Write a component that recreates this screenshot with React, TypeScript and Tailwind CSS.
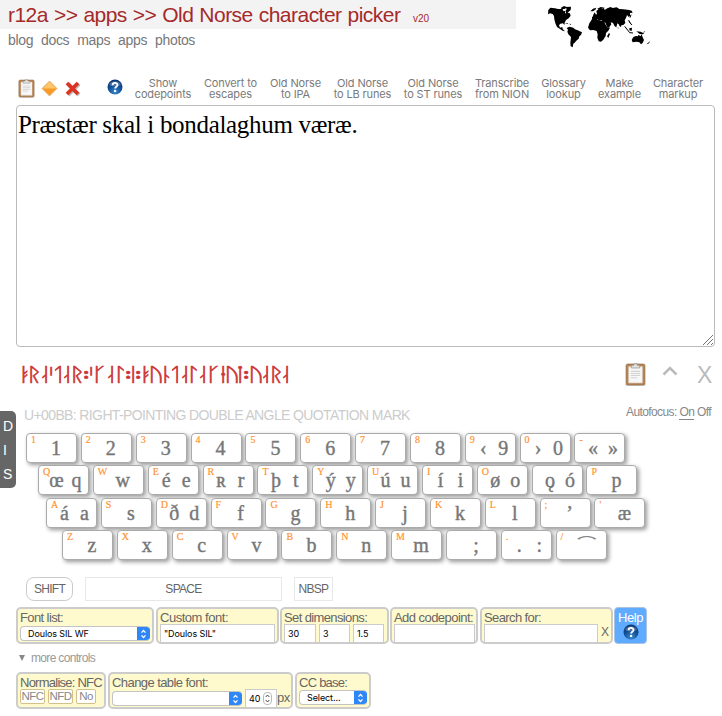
import type { ReactNode } from "react";

const RUNES: [string, number][] = [
  ["ᛓ", 24.5], ["ᚱ", 34], ["ᛆ", 45], ["ᛌ", 51], ["ᛐ", 58], ["ᛆ", 67], ["ᚱ", 77], ["᛬", 86], ["ᛌ", 91], ["ᚴ", 99],
  ["ᛆ", 111], ["ᛚ", 120], ["᛬", 128], ["ᛁ", 133], ["᛬", 138], ["ᛓ", 146], ["ᚢ", 156], ["ᚿ", 166], ["ᛐ", 175],
  ["ᛆ", 185], ["ᛚ", 193], ["ᛆ", 203], ["ᚴ", 213], ["ᚽ", 223], ["ᚢ", 232], ["ᛙ", 240], ["᛬", 246], ["ᚢ", 256],
  ["ᛆ", 266], ["ᚱ", 276], ["ᛆ", 286],
];

const ROWS: { indent: string; keys: [string, string][] }[] = [
  { indent: "pl-[26px]", keys: [["1", "1"], ["2", "2"], ["3", "3"], ["4", "4"], ["5", "5"], ["6", "6"], ["7", "7"], ["8", "8"], ["9", "‹ 9"], ["0", "› 0"], ["-", "« »"]] },
  { indent: "pl-[38px]", keys: [["Q", "œ q"], ["W", "w"], ["E", "é e"], ["R", "ʀ r"], ["T", "þ t"], ["Y", "ý y"], ["U", "ú u"], ["I", "í i"], ["O", "ø o"], ["", "ǫ ó"], ["P", "p"]] },
  { indent: "pl-[46px]", keys: [["A", "á a"], ["S", "s"], ["D", "ð d"], ["F", "f"], ["G", "g"], ["H", "h"], ["J", "j"], ["K", "k"], ["L", "l"], [";", "’"], ["'", "æ"]] },
  { indent: "pl-[62px]", keys: [["Z", "z"], ["X", "x"], ["C", "c"], ["V", "v"], ["B", "b"], ["N", "n"], ["M", "m"], ["", ";"], [".", ". :"], ["/", "⁀"]] },
];

const ACTIONS: [string, string, string][] = [
  ["w-[70px]", "Show", "codepoints"], ["w-[65px]", "Convert to", "escapes"], ["w-[65px]", "Old Norse", "to IPA"],
  ["w-[69px]", "Old Norse", "to LB runes"], ["w-[72px]", "Old Norse", "to ST runes"], ["w-[66px]", "Transcribe", "from NION"],
  ["w-[57px]", "Glossary", "lookup"], ["w-[55px]", "Make", "example"], ["w-[62px]", "Character", "markup"],
];

function Clipboard({ w, h }: { w: number; h: number }) {
  return (
    <svg width={w} height={h} viewBox="0 0 20 22" className="shrink-0">
      <ellipse cx="10" cy="21" rx="10" ry="1" fill="#ccc" />
      <rect x="1" y="1" width="18" height="20" rx="1.5" fill="#b98452" stroke="#8d6a48" strokeWidth=".6" />
      <path d="M3.500 3.500h13v15.500h-13z" fill="#f7f7f7" stroke="#ddd" strokeWidth=".5" />
      <path d="M5.500 8h9M5.500 10h9M5.500 12h9M5.500 14h6" stroke="#d2d2d2" strokeWidth="1" />
      <path d="M6 2.200h2.500V.7h3v1.500H14v2.600H6z" fill="#e3e3dc" stroke="#888" strokeWidth=".6" />
    </svg>
  );
}

function HelpBall() {
  return (
    <svg width="16" height="16" viewBox="0 0 16 16" className="shrink-0">
      <defs>
        <radialGradient id="ball" cx=".5" cy=".85" r=".9">
          <stop offset="0" stopColor="#3b8ad0" />
          <stop offset=".5" stopColor="#124f96" />
          <stop offset="1" stopColor="#0b2f68" />
        </radialGradient>
      </defs>
      <circle cx="8" cy="8" r="7.500" fill="url(#ball)" />
      <path d="M2 6a6.200 5 0 0 1 12 0Q8 8.500 2 6z" fill="#fff" opacity=".22" />
      <path d="M5.600 6.200C5.600 3.200 10.500 3.200 10.500 6c0 1.700-2.400 1.700-2.400 3.500" fill="none" stroke="#fff" strokeWidth="1.900" />
      <circle cx="8.100" cy="11.900" r="1.200" fill="#fff" />
    </svg>
  );
}

function WorldMap() {
  return (
    <svg width="106" height="44" viewBox="54 12 318 132" fill="#000">
      <path d="M55 30l6-7 14 2 12 3 10-2 4 8 6-2-2 7 8 4 6-4 3 8-6 8-8 5-4 8-1 7-4-5-8 1-4 5 3 7 7-2 1 6 7 7-7-2-9-6-8-5-5-11-3-12-1-10-4-6-8-2-6 3z" />
      <path d="M92 24l10-6 8 3-4 5-10 2zM106 21l17-1-1 10-10 9-5-6 3-6zM108 34l12 8-5 4-7-5zM104 69l9 1 2 3zM117 71l6 1v3zM76 27l12 0 4 5-10 1z" />
      <path d="M110 84l8-4 12 3 5 5 8 3 13 6-3 8-5 4-2 7-7 6-5 6-4 3-2 11-6-3-1-10 2-18-8-8-3-8 2-6z" />
      <path d="M181 34l8-8 10-3-3 6-7 5zM202 26l10-5 12 2-10 4-8 2zM190 44l4-7 4 7 3-3-2-8 8-7 10 1 5-3 2 6 8-5 10-4 6 3 12-2 8 5 12 1 17 2 8 2 3 6-8 1 0 9-4 3-5-6-3 9-4 7 2 8-6 6-6 1-1 5-4-2-3-6-4-3-3 12-5-3-5-10-7-2 2 6-7 10-6-3-5-12-9-2-1-6-6 0-3 4-4-7-4 5-6 2-5-3-4 2z" />
      <path d="M178 70l7-11 14-2 8 4 14 1 5 11 6 9 8 1-5 9-7 7-1 9-7 11-7 6-7-1-4-11 1-10-3-10-10-3-10 1-6-8z" />
      <path d="M231 109l6-10 3 3-5 12zM186 51l8-2-2 7-6-1z" />
      <path d="M305 120l5-9 8-3 5 1 3-5 5 5 4-6 3 9 4 8-4 9-5 4-5-6-8-2-12 2zM319 94l13 1 11 6-5 2-9-1zM298 85l8-2-1 10-7-2zM293 60l6 2 5 12-4-4zM351 131l10-8-4 7-5 3zM263 81l3 3-2 2zM337 98l7-4 1 2z" />
      <path d="M284 79l15 19 10 1M299 67l7 8M303 44l-3 9" fill="none" stroke="#000" strokeWidth="3" />
    </svg>
  );
}

function Stepper() {
  return (
    <span className="flex h-[15px] w-[13px] shrink-0 items-center justify-center rounded-r-[3px] bg-[#2f87f7]">
      <svg width="7" height="10" viewBox="0 0 7 10" fill="none" stroke="#fff" strokeWidth="1.200">
        <path d="M1.500 3.700l2-2.200 2 2.200M1.500 6.300l2 2.200 2-2.200" />
      </svg>
    </span>
  );
}

function Select({ className, children }: { className: string; children?: ReactNode }) {
  return (
    <span className={`flex h-[15px] items-center justify-between overflow-hidden rounded-[4px] border border-r-0 border-[#c4c4c4] bg-white font-['Inter',sans-serif] text-[9px] leading-[13px] tracking-[-0.100px] text-black ${className}`}>
      <span className="pl-[7px]">{children}</span>
      <Stepper />
    </span>
  );
}

function Input({ className, children }: { className: string; children?: ReactNode }) {
  return (
    <span className={`flex h-[19px] items-center border border-[#ccc] bg-white pl-[3px] font-['Inter',sans-serif] text-[9px] tracking-[-0.100px] text-black ${className}`}>
      {children}
    </span>
  );
}

function Panel({ className, label, tracking, children }: { className: string; label: string; tracking: string; children: ReactNode }) {
  return (
    <div className={`h-[37px] rounded-[5px] border-2 border-[#ccc] bg-[#fffacd] pl-[2px] text-[13px] text-[#666] ${className}`}>
      <div className={`h-[15px] whitespace-nowrap leading-[18px] ${tracking}`}>{label}</div>
      {children}
    </div>
  );
}

function Key({ hint, glyphs }: { hint: string; glyphs: string }) {
  const parts = glyphs.split(" ");
  const tie = glyphs === "⁀";
  return (
    <div className="relative flex h-[30px] w-[51px] shrink-0 rounded-[4px] border border-[#aaa] bg-white pl-[7.500px] shadow-[2px_2px_4px_#999]">
      <span className="absolute left-[4px] top-0 text-[10px] leading-[11px] text-[#ff9430] [-webkit-text-stroke:0.2px_#ff9430]">{hint}</span>
      {parts.length === 2 ? (
        parts.map((p, i) => (
          <span key={i} className="w-[20px] shrink-0 text-center text-[20px] leading-[28px] text-[#777] [-webkit-text-stroke:0.4px_#777]">{p}</span>
        ))
      ) : (
        <span className={`w-[43px] shrink-0 text-center text-[20px] leading-[28px] text-[#777] [-webkit-text-stroke:0.4px_#777] ${tie ? "origin-[46%_4px] scale-x-[1.6] scale-y-75" : ""}`}>{parts[0]}</span>
      )}
    </div>
  );
}

function Mini({ className, children }: { className: string; children: ReactNode }) {
  return <span className={`flex h-[15px] items-center justify-center rounded-[2px] border border-[#d3c18c] bg-white text-[11.500px] leading-[13px] tracking-[-0.500px] text-[#888] ${className}`}>{children}</span>;
}

export default function App() {
  return (
    <div className="flex h-[716px] w-[722px] flex-col overflow-hidden bg-white font-['Liberation_Sans',Arial,sans-serif]">
      <header className="flex h-[72px]">
        <div className="w-[516px]">
          <div className="flex h-[29px] items-baseline whitespace-nowrap bg-[#f3f3f3] pl-[8px] text-[#a52a2a]">
            <h1 className="w-[405px] text-[21px] leading-[30px] tracking-[-0.530px] [word-spacing:0.700px]">r12a &gt;&gt; apps &gt;&gt; Old Norse character picker</h1>
            <span className="text-[10px]">v20</span>
          </div>
          <nav className="flex gap-[8px] pl-[8px] text-[14px] leading-[23px] tracking-[-0.350px] text-[#777]">
            <a>blog</a><a>docs</a><a>maps</a><a>apps</a><a>photos</a>
          </nav>
        </div>
        <div className="pl-[32px] pt-[4px]"><WorldMap /></div>
      </header>

      <div className="flex h-[33px] pl-[18px]">
        <div className="flex w-[110px] shrink-0 gap-[6px] pt-[7px]">
          <Clipboard w={17} h={19} />
          <svg width="17" height="18" viewBox="0 0 17 18" className="shrink-0">
            <path d="M8.500 2L16 9.500 8.500 17 1 9.500z" fill="#f79a26" stroke="#ddb27c" strokeWidth=".8" />
            <path d="M8.500 2.500L15 9.500H2z" fill="#ffc56d" />
          </svg>
          <svg width="17" height="18" viewBox="0 0 17 18" className="shrink-0">
            <path d="M4 5l11 11M15 5L4 16" stroke="#bbb" strokeWidth="4" />
            <path d="M3 4l11 11M14 4L3 15" stroke="#dd3322" strokeWidth="3.800" />
          </svg>
          <div className="pl-[20px]"><HelpBall /></div>
        </div>
        <div className="flex pt-[6px] text-center font-['Inter',sans-serif] text-[11px] leading-[11px] tracking-[-0.130px] text-[#7a7a7a]">
          {ACTIONS.map(([w, a, b]) => <div key={a + b} className={`shrink-0 whitespace-nowrap ${w}`}>{a}<br />{b}</div>)}
        </div>
      </div>

      <div className="ml-[16px] flex h-[242px] w-[699px] shrink-0 items-end rounded-[4px] border border-[#bbb]">
        <p className="h-full flex-1 pl-[1px] font-['Liberation_Serif',serif] text-[25px] leading-[38px] tracking-[-0.310px] text-black">Præstær skal i bondalaghum væræ.</p>
        <svg width="12" height="12" viewBox="0 0 12 12" stroke="#777"><path d="M1 11L11 1M5 11l6-6M9 11l2-2" /></svg>
      </div>

      <div className="flex h-[58px] shrink-0 items-start pt-[15px]">
        <div className="flex h-[27px] w-[625px] scale-y-[0.78] font-['DejaVu_Sans',sans-serif] text-[24px] leading-[27px] text-[#cc3333] [-webkit-text-stroke:0.600px_#cc3333]">
          {RUNES.map(([c, x], i) => (
            <span key={i} className="flex w-0 scale-x-[1.12] justify-center" style={{ marginLeft: x - (i ? RUNES[i - 1][1] : 0) }}>{c}</span>
          ))}
        </div>
        <Clipboard w={21} h={25} />
        <svg width="16" height="12" viewBox="0 0 16 12" className="ml-[16px] mt-[3px]" fill="none" stroke="#bbb" strokeWidth="2.500"><path d="M1.500 9.500L8 3l6.500 6.500" /></svg>
        <span className="ml-[19px] text-[23px] leading-[27px] text-[#bbb]">X</span>
      </div>

      <div className="flex h-[172px] shrink-0 pt-[6px]">
        <div className="mr-[-16px] flex h-[77px] w-[16px] shrink-0 flex-col rounded-r-[5px] bg-[#666] pl-[3px] pt-[3px] text-[14px] leading-[24px] text-white"><span>D</span><span>I</span><span>S</span></div>
        <div className="flex flex-1 flex-col">
          <div className="flex h-[22px] justify-between whitespace-nowrap pl-[24px] pr-[11px]">
            <span className="text-[14px] leading-[9px] tracking-[-0.620px] text-[#ccc]">U+00BB: RIGHT-POINTING DOUBLE ANGLE QUOTATION MARK</span>
            <span className="text-[12px] leading-[3px] tracking-[-0.600px] text-[#888]">Autofocus: <span className="border-b border-[#888]">On</span> Off</span>
          </div>
          <div className="flex flex-col gap-[2.300px] font-['Liberation_Serif',serif]">
            {ROWS.map((row) => (
              <div key={row.indent} className={`flex gap-[3.850px] ${row.indent}`}>
                {row.keys.map(([h, g]) => <Key key={g} hint={h} glyphs={g} />)}
              </div>
            ))}
          </div>
        </div>
      </div>

      <div className="flex h-[30px] shrink-0 pl-[26px] text-center text-[12px] leading-[23px] tracking-[-0.700px] text-[#666]">
        <div className="h-[24px] w-[47px] rounded-[8px] border border-[#ccc]">SHIFT</div>
        <div className="ml-[12px] h-[24px] w-[197px] border border-[#e8e8e8]">SPACE</div>
        <div className="ml-[12px] h-[24px] w-[39px] border border-[#e8e8e8]">NBSP</div>
      </div>

      <div className="flex h-[37px] shrink-0 pl-[16px]">
        <Panel className="w-[138px]" label="Font list:" tracking="tracking-[-0.600px]"><Select className="mt-[2px] w-[130px]">Doulos SIL WF</Select></Panel>
        <Panel className="ml-[2px] w-[123px]" label="Custom font:" tracking="tracking-[-0.470px]"><Input className="w-[115px]">"Doulos SIL"</Input></Panel>
        <Panel className="ml-[1px] w-[109px]" label="Set dimensions:" tracking="tracking-[-0.620px]">
          <div className="flex gap-[3px]"><Input className="w-[32px]">30</Input><Input className="w-[31px]">3</Input><Input className="w-[31px]">1.5</Input></div>
        </Panel>
        <Panel className="ml-[1px] w-[88px]" label="Add codepoint:" tracking="tracking-[-0.550px]"><Input className="w-[81px]" /></Panel>
        <Panel className="ml-[2px] w-[133px]" label="Search for:" tracking="tracking-[-0.600px]">
          <div className="flex gap-[3px]"><Input className="w-[114px]" /><span className="text-[12px] leading-[16px]">X</span></div>
        </Panel>
        <div className="ml-[1px] flex h-[37px] w-[33px] flex-col items-center rounded-[4px] border border-[#a9c3e0] bg-[#5fabff] text-[13px] leading-[20px] tracking-[-0.430px] text-white">
          <span className="h-[16px]">Help</span><HelpBall />
        </div>
      </div>

      <div className="flex h-[27px] shrink-0 items-center gap-[6px] pl-[19px] text-[12px] tracking-[-0.670px] text-[#999]">
        <svg width="6" height="6" viewBox="0 0 6 6"><path d="M0 0h6L3 6z" fill="#888" /></svg>more controls
      </div>

      <div className="flex h-[38px] shrink-0 pl-[16px] pt-[1px]">
        <Panel className="w-[90px]" label="Normalise: NFC" tracking="tracking-[-0.750px]"><div className="flex gap-[3px]"><Mini className="w-[25px]">NFC</Mini><Mini className="w-[25px]">NFD</Mini><Mini className="w-[20px]">No</Mini></div></Panel>
        <Panel className="ml-[2px] w-[185px]" label="Change table font:" tracking="tracking-[-0.570px]">
          <div className="flex items-start">
            <Select className="mt-[2px] w-[130px]" />
            <Input className="ml-[3px] w-[32px]">40<span className="ml-[3px] flex h-[13px] w-[9px] items-center justify-center rounded-[4px] border border-[#bbb]"><svg width="5" height="9" viewBox="0 0 5 9" fill="none" stroke="#444"><path d="M.7 3l1.800-2 1.800 2M.7 6l1.800 2 1.800-2" /></svg></span></Input>
            <span className="leading-[17px] tracking-[-0.500px]">px</span>
          </div>
        </Panel>
        <Panel className="ml-[2px] w-[76px]" label="CC base:" tracking="tracking-[-0.750px]"><Select className="mt-[1px] w-[68px]">Select...</Select></Panel>
      </div>
    </div>
  );
}
